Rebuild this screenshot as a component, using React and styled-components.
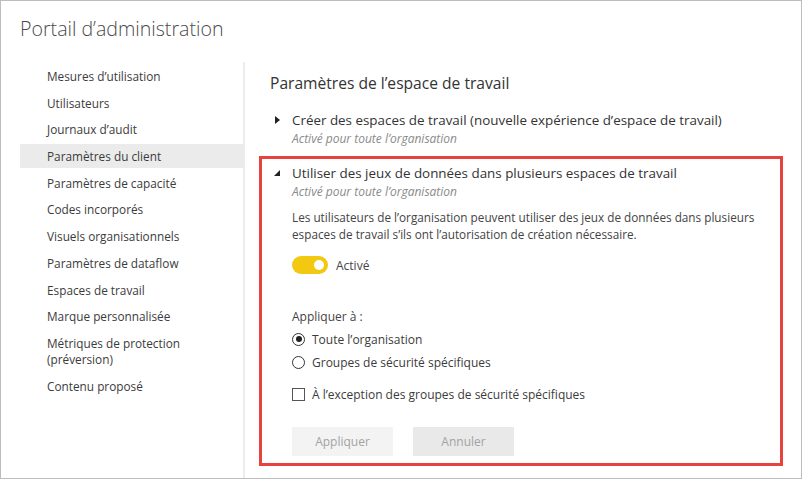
import React from "react";
import styled, { createGlobalStyle } from "styled-components";

const GlobalStyle = createGlobalStyle`
  html, body {
    margin: 0;
    padding: 0;
    background: #ffffff;
  }
  * {
    box-sizing: border-box;
  }
`;

const Frame = styled.div`
  width: 802px;
  height: 479px;
  border: 1px solid #bdbdbd;
  display: flex;
  flex-direction: column;
  overflow: hidden;
  font-family: "Open Sans", "Noto Sans", sans-serif;
  color: #333;
`;

const Title = styled.h1`
  margin: 0;
  padding: 14px 0 0 19px;
  height: 61px;
  font-size: 19.6px;
  line-height: 28px;
  font-weight: 300;
  color: #4a4a4a;
`;

const Body = styled.div`
  flex: 1;
  display: flex;
`;

const SideBar = styled.nav`
  width: 225px;
  margin-left: 19px;
  padding-top: 2px;
  border-right: 2px solid #ececec;
  display: flex;
  flex-direction: column;
  gap: 2.7px;
`;

const NavItem = styled.div`
  padding: 4px 0 4px 27px;
  font-size: 11.8px;
  line-height: 16px;
  color: #3b3b3b;
  background: ${(p) => (p.$active ? "#ebebeb" : "transparent")};
`;

const Main = styled.main`
  flex: 1;
  padding: 11px 0 0 14px;
`;

const Heading = styled.h2`
  margin: 0 0 17px 11px;
  font-size: 15.6px;
  line-height: 20px;
  font-weight: 400;
  color: #333;
`;

const Setting = styled.section`
  width: 524px;
  border: 3px solid ${(p) => (p.$highlight ? "#e8423f" : "transparent")};
  padding: ${(p) => (p.$highlight ? "4px 12px 7px" : "0 12px")};
  margin: ${(p) => (p.$highlight ? "0" : "-3px 0 6px")};
`;

const SettingHead = styled.div`
  display: flex;
  align-items: center;
  gap: 12px;
`;

const Caret = styled.span`
  width: 6px;
  display: flex;
  justify-content: center;
`;

const SettingTitle = styled.div`
  font-size: 13.4px;
  line-height: 20px;
  color: #333;
`;

const SettingSub = styled.div`
  margin: 1px 0 0 18px;
  font-size: 12px;
  line-height: 16px;
  font-style: italic;
  color: #8a8a8a;
`;

const SettingBody = styled.div`
  padding-left: 18px;
`;

const Description = styled.p`
  margin: 8.5px 0 0;
  font-size: 11.75px;
  line-height: 17px;
  color: #444;
`;

const ToggleRow = styled.div`
  margin-top: 13.5px;
  display: flex;
  align-items: center;
  gap: 8px;
  font-size: 12px;
  color: #444;
`;

const Toggle = styled.span`
  width: 36px;
  height: 18px;
  border-radius: 9px;
  background: #f2c811;
  display: flex;
  align-items: center;
  justify-content: flex-end;
  padding-right: 4px;

  &::after {
    content: "";
    width: 10px;
    height: 10px;
    border-radius: 50%;
    background: #fff;
  }
`;

const ApplyLabel = styled.div`
  margin-top: 34px;
  font-size: 12px;
  line-height: 18px;
  color: #444;
`;

const OptionRow = styled.label`
  display: flex;
  align-items: center;
  gap: 7px;
  height: 23px;
  font-size: 12px;
  color: #3b3b3b;
  margin-top: ${(p) => p.$gap || 0}px;
`;

const Radio = styled.span`
  width: 13px;
  height: 13px;
  border-radius: 50%;
  border: 1px solid #333;
  display: flex;
  align-items: center;
  justify-content: center;

  &::after {
    content: "";
    width: 6px;
    height: 6px;
    border-radius: 50%;
    background: ${(p) => (p.$checked ? "#222" : "transparent")};
  }
`;

const Checkbox = styled.span`
  width: 13px;
  height: 13px;
  border: 1px solid #555;
`;

const Buttons = styled.div`
  margin-top: 21.5px;
  display: flex;
  gap: 20px;
`;

const Button = styled.button`
  width: 101px;
  height: 29px;
  border: none;
  font-family: inherit;
  font-size: 12px;
  color: #a3a3a3;
  background: ${(p) => (p.$secondary ? "#e9e9e9" : "#f3f3f3")};
`;

const navItems = [
  "Mesures d’utilisation",
  "Utilisateurs",
  "Journaux d’audit",
  "Paramètres du client",
  "Paramètres de capacité",
  "Codes incorporés",
  "Visuels organisationnels",
  "Paramètres de dataflow",
  "Espaces de travail",
  "Marque personnalisée",
  "Métriques de protection (préversion)",
  "Contenu proposé",
];

function CaretRight() {
  return (
    <svg width="5" height="8" viewBox="0 0 5 8">
      <path d="M0 0 L5 4 L0 8 Z" fill="#222" />
    </svg>
  );
}

function CaretDown() {
  return (
    <svg width="6" height="6" viewBox="0 0 6 6">
      <path d="M6 0 L6 6 L0 6 Z" fill="#222" />
    </svg>
  );
}

export default function App() {
  return (
    <>
      <GlobalStyle />
      <Frame>
        <Title>Portail d’administration</Title>
        <Body>
          <SideBar>
            {navItems.map((item) => (
              <NavItem key={item} $active={item === "Paramètres du client"}>
                {item === "Métriques de protection (préversion)" ? (
                  <>
                    Métriques de protection
                    <br />
                    (préversion)
                  </>
                ) : (
                  item
                )}
              </NavItem>
            ))}
          </SideBar>
          <Main>
            <Heading>Paramètres de l’espace de travail</Heading>
            <Setting>
              <SettingHead>
                <Caret>
                  <CaretRight />
                </Caret>
                <SettingTitle>
                  Créer des espaces de travail (nouvelle expérience d’espace de travail)
                </SettingTitle>
              </SettingHead>
              <SettingSub>Activé pour toute l’organisation</SettingSub>
            </Setting>
            <Setting $highlight>
              <SettingHead>
                <Caret>
                  <CaretDown />
                </Caret>
                <SettingTitle>
                  Utiliser des jeux de données dans plusieurs espaces de travail
                </SettingTitle>
              </SettingHead>
              <SettingSub>Activé pour toute l’organisation</SettingSub>
              <SettingBody>
                <Description>
                  Les utilisateurs de l’organisation peuvent utiliser des jeux de données dans plusieurs
                  <br />
                  espaces de travail s’ils ont l’autorisation de création nécessaire.
                </Description>
                <ToggleRow>
                  <Toggle />
                  Activé
                </ToggleRow>
                <ApplyLabel>Appliquer à :</ApplyLabel>
                <OptionRow $gap={1.5}>
                  <Radio $checked />
                  Toute l’organisation
                </OptionRow>
                <OptionRow>
                  <Radio />
                  Groupes de sécurité spécifiques
                </OptionRow>
                <OptionRow $gap={9}>
                  <Checkbox />
                  À l’exception des groupes de sécurité spécifiques
                </OptionRow>
                <Buttons>
                  <Button>Appliquer</Button>
                  <Button $secondary>Annuler</Button>
                </Buttons>
              </SettingBody>
            </Setting>
          </Main>
        </Body>
      </Frame>
    </>
  );
}
